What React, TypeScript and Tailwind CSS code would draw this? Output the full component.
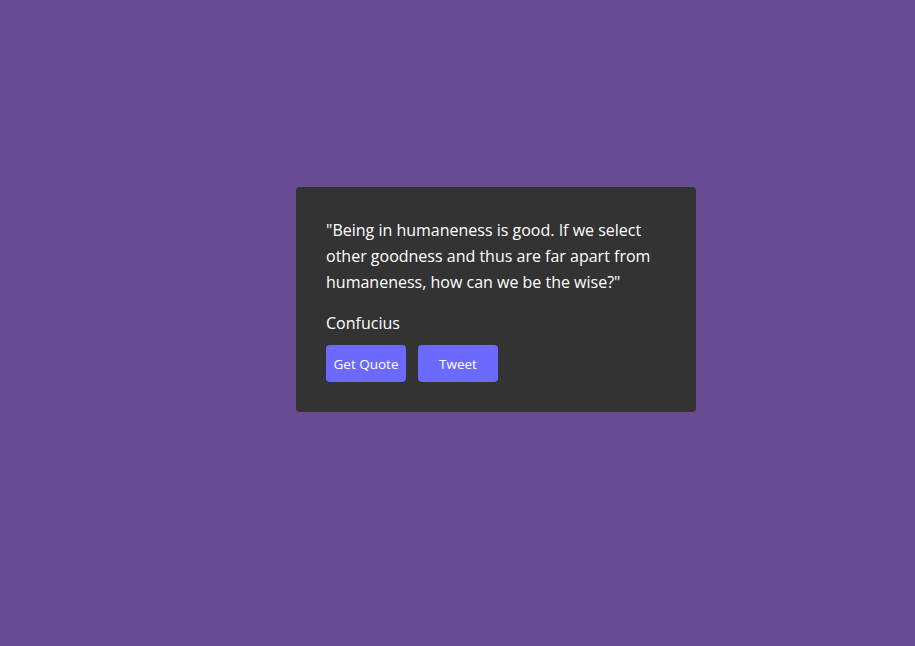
export default function App() {
  return (
    <div className="min-h-[646px] w-full bg-[#674b93] pl-[296px] pt-[187px]" style={{ fontFamily: '"Open Sans", "Noto Sans", sans-serif' }}>
      <div className="w-[400px] rounded-[4px] bg-[#333333] p-[30px] text-white">
        <p className="text-[16px] leading-[26px]">"Being in humaneness is good. If we select other goodness and thus are far apart from humaneness, how can we be the wise?"</p>
        <p className="mt-[15px] text-[16px] leading-[26px]">Confucius</p>
        <div className="mt-[9px] flex gap-[12px]">
          <button className="h-[37px] w-[80px] rounded-[4px] bg-[#6c69ff] pt-[2px] text-[13.5px] text-white">Get Quote</button>
          <button className="h-[37px] w-[80px] rounded-[4px] bg-[#6c69ff] pt-[2px] text-[13.5px] text-white">Tweet</button>
        </div>
      </div>
    </div>
  );
}
